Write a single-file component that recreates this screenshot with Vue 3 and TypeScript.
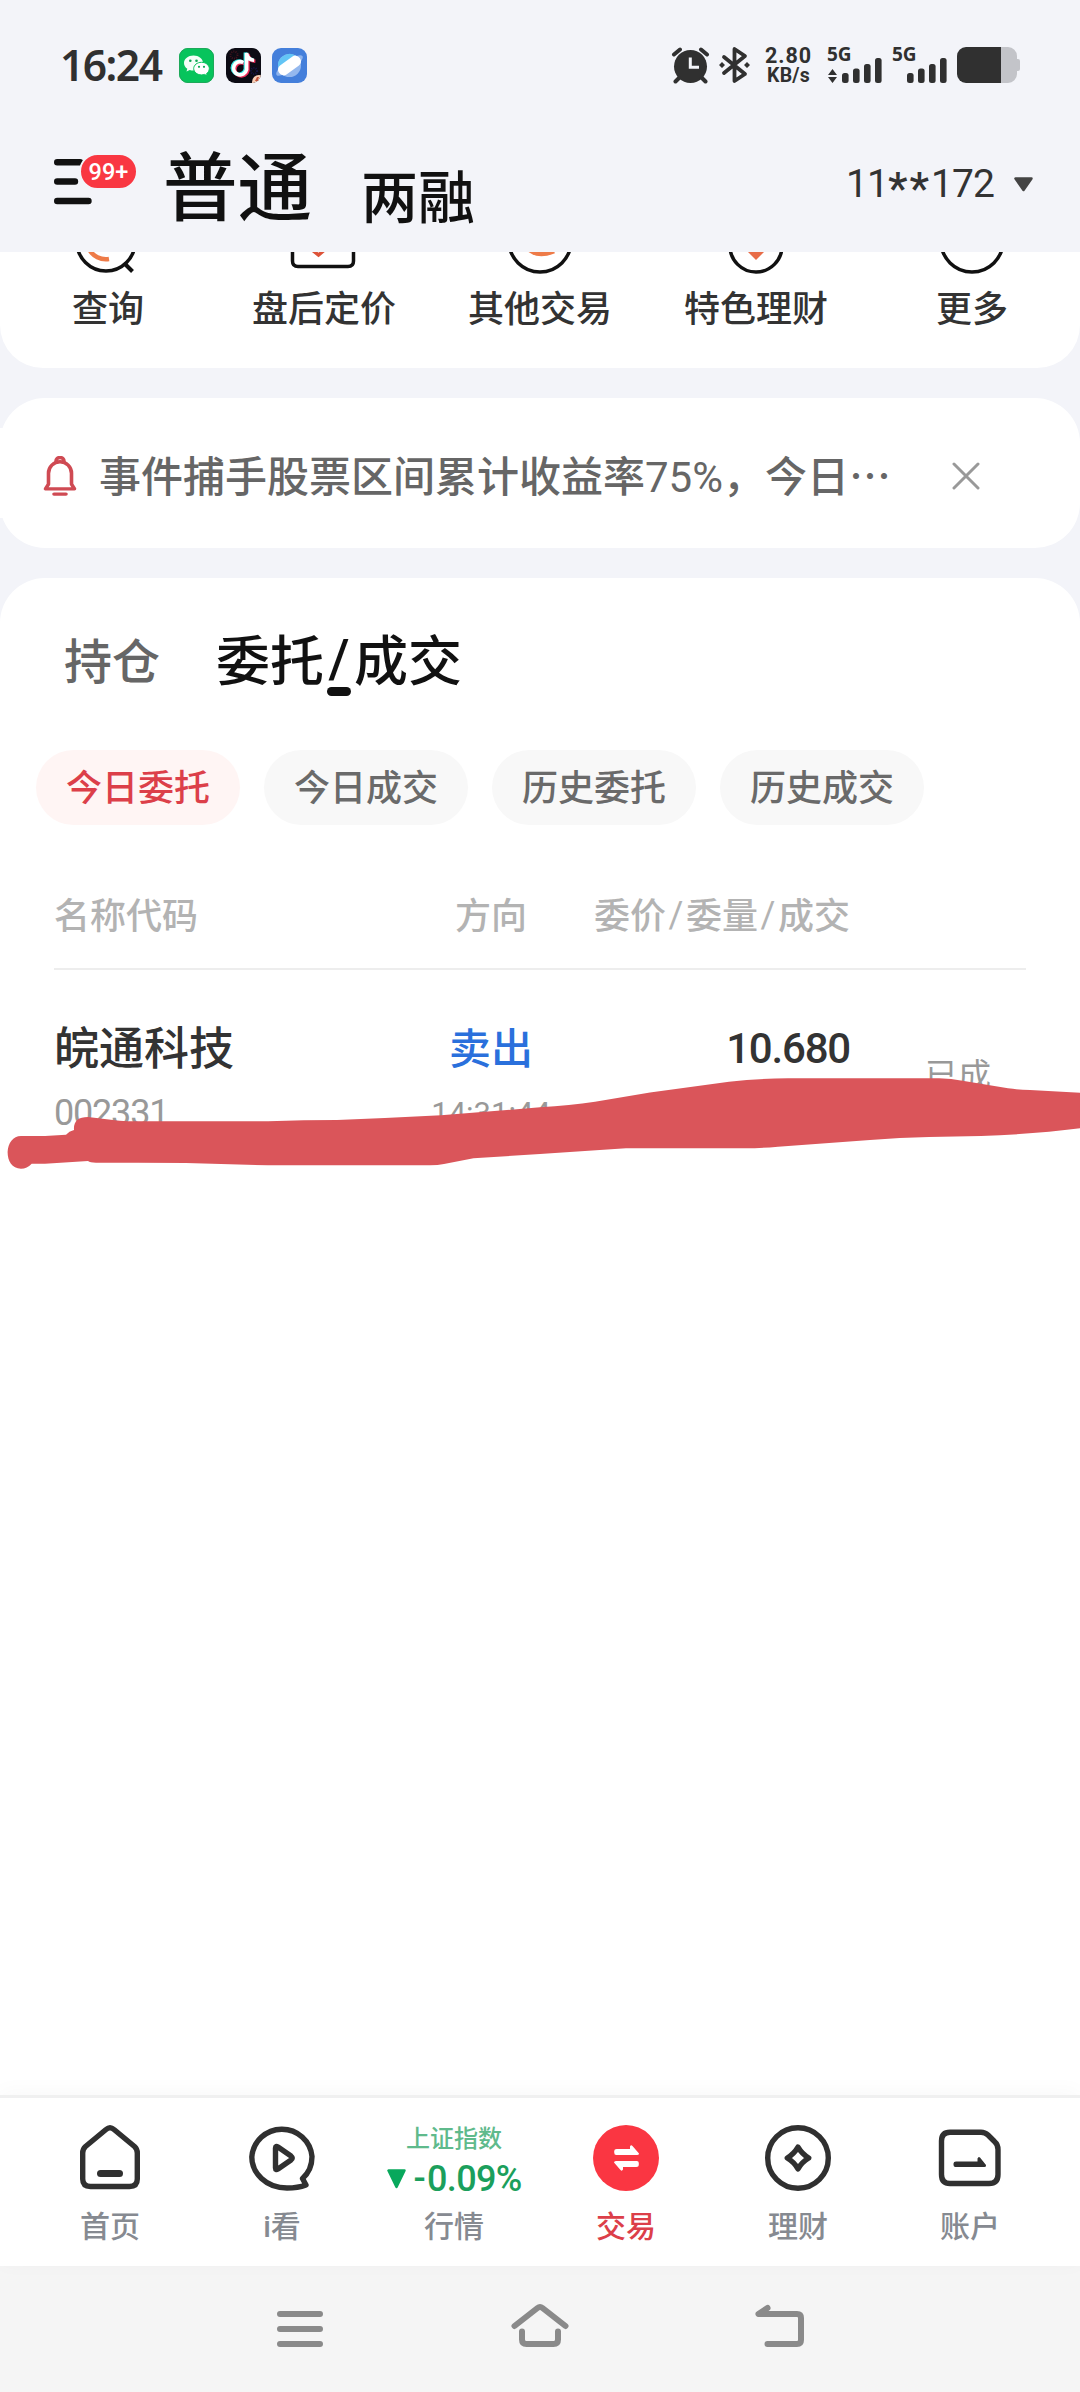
<script setup lang="ts">
interface Bar { x: number; y: number }

const shortcuts: { id: string; label: string }[] = [
  { id: 'query', label: '查询' },
  { id: 'after', label: '盘后定价' },
  { id: 'other', label: '其他交易' },
  { id: 'wealth', label: '特色理财' },
  { id: 'more', label: '更多' },
]
const filters: string[] = ['今日委托', '今日成交', '历史委托', '历史成交']
const tabs: { id: string; label: string }[] = [
  { id: 'home', label: '首页' },
  { id: 'look', label: 'i看' },
  { id: 'market', label: '行情' },
  { id: 'trade', label: '交易' },
  { id: 'finance', label: '理财' },
  { id: 'account', label: '账户' },
]
const bars: Bar[] = [
  { x: 15, y: 27 },
  { x: 26, y: 22.5 },
  { x: 37, y: 18 },
  { x: 48, y: 12 },
]
</script>

<template>
  <div class="phone">
    <div class="status">
      <div class="clock">16:24</div>
      <div class="apps">
        <svg width="35" height="35" viewBox="0 0 35 35">
          <rect width="35" height="35" rx="9" fill="#07c45c" />
          <rect x=".5" y=".5" width="34" height="34" rx="8.5" fill="none" stroke="#1ea85a" />
          <path d="M14.5 7.5c-5.3 0-9.5 3.3-9.5 7.5 0 2.4 1.300 4.400 3.300 5.800l-.8 2.700 3.200-1.600c1.200.4 2.500.6 3.800.6 5.300 0 9.500-3.300 9.500-7.500s-4.200-7.500-9.500-7.500z" fill="#f4fff8" />
          <path d="M22.500 14.300c-4.300 0-7.800 2.800-7.800 6.300s3.500 6.300 7.800 6.300c1.100 0 2.100-.2 3-.5l2.700 1.400-.6-2.300c1.700-1.200 2.700-2.900 2.700-4.900 0-3.500-3.500-6.300-7.800-6.300z" fill="#fff" stroke="#07c45c" stroke-width="1" />
          <g fill="#0ca652"><circle cx="11.300" cy="12.800" r="1.300" /><circle cx="17.500" cy="12.800" r="1.300" /><circle cx="20" cy="18.800" r="1.100" /><circle cx="25" cy="18.800" r="1.100" /></g>
        </svg>
        <svg width="35" height="35" viewBox="0 0 35 35">
          <defs><clipPath id="tk"><rect width="35" height="35" rx="9" /></clipPath></defs>
          <g clip-path="url(#tk)">
            <rect width="35" height="35" fill="#0c0b14" />
            <circle cx="8" cy="7" r="3.500" fill="none" stroke="#45131f" stroke-width="2" stroke-dasharray="1 1.200" />
            <circle cx="28" cy="23" r="3" fill="none" stroke="#171748" stroke-width="2" stroke-dasharray="1 1.200" />
            <g fill="none" stroke-width="3.600">
              <path d="M17.300 14.500a6.600 6.600 0 1 0 3.300 7.200V5c.5 4.500 3.300 7 7.500 7.300" stroke="#ee2d58" transform="translate(1.300 1)" />
              <path d="M17.300 14.500a6.600 6.600 0 1 0 3.300 7.200V5c.5 4.500 3.300 7 7.500 7.300" stroke="#3fe5e3" transform="translate(-1.200 -.6)" />
              <path d="M17.300 14.500a6.600 6.600 0 1 0 3.300 7.200V5c.5 4.500 3.300 7 7.500 7.300" stroke="#fff" />
            </g>
            <circle cx="33" cy="34" r="7" fill="#f8cdb5" />
            <path d="M31 29l-2 4h2l-1 3 4-4h-2l1-3z" fill="#c4553c" />
          </g>
        </svg>
        <svg width="35" height="35" viewBox="0 0 35 35">
          <rect width="35" height="35" rx="9" fill="#447fdb" />
          <circle cx="17.500" cy="17.500" r="11.500" fill="#94b8ee" />
          <path d="M6.600 21A11.500 11.500 0 0 1 24 8z" fill="#63c5f5" />
          <g transform="rotate(-36 17.500 17.500)">
            <ellipse cx="17.500" cy="17.500" rx="16" ry="5" fill="#8fb4ec" />
            <rect x="4.800" y="12" width="25.400" height="11" rx="5" fill="#fff" />
          </g>
        </svg>
      </div>
      <div class="sys">
        <svg class="alarm" width="39" height="38" viewBox="0 0 39 38">
          <circle cx="19.500" cy="20.500" r="16.500" fill="#303030" />
          <path d="M3 8.500L9 3.500M36 8.500L30 3.500M8 32l-3.500 3.500M31 32l3.500 3.500" stroke="#303030" stroke-width="4" stroke-linecap="round" />
          <path d="M19.300 11.500V21.300H28" fill="none" stroke="#f3f4f9" stroke-width="3" />
        </svg>
        <svg class="bt" width="31" height="38" viewBox="0 0 31 38">
          <path d="M5 11L26 28 15.500 35V3L26 10 5 27" fill="none" stroke="#303030" stroke-width="3.800" stroke-linejoin="round" stroke-linecap="round" />
          <path d="M3 16l3 3-3 3-3-3zM28 16l3 3-3 3-3-3z" fill="#303030" />
        </svg>
        <div class="net"><span>2.80</span><span class="unit">KB/s</span></div>
        <div v-for="n in 2" :key="n" class="sig">
          <svg width="56" height="38" viewBox="0 0 56 38">
            <rect v-for="b in bars" :key="b.x" :x="b.x" :y="b.y" width="6.600" :height="37 - b.y" rx="2.500" fill="#303030" />
            <path v-if="n === 1" d="M5.500 23l4.500 6H1zM5.500 37l4.500-6H1z" fill="#303030" />
          </svg>
          <span class="gen">5G</span>
        </div>
        <svg class="batt" width="63" height="36" viewBox="0 0 63 36">
          <path d="M44 0h7a9 9 0 0 1 9 9v3h1a2 2 0 0 1 2 2v8a2 2 0 0 1-2 2h-1v3a9 9 0 0 1-9 9h-7z" fill="#c3c4c9" />
          <path d="M9 0h35v36H9a9 9 0 0 1-9-9V9a9 9 0 0 1 9-9z" fill="#303030" />
        </svg>
      </div>
    </div>

    <header class="head">
      <div class="menu">
        <svg width="40" height="46" viewBox="0 0 40 46">
          <path d="M3.200 3.200H26M3.200 22.500H21M3.200 42H34.500" stroke="#111" stroke-width="6.400" stroke-linecap="round" />
        </svg>
        <span class="badge">99+</span>
      </div>
      <div class="t1">普通</div>
      <div class="t2">两融</div>
      <div class="acct">11<span class="star">**</span>172</div>
      <svg class="caret" width="19" height="15" viewBox="0 0 19 15"><path d="M1.500 1.500h16L9.500 13z" fill="#444" stroke="#444" stroke-width="2.500" stroke-linejoin="round" /></svg>
    </header>

    <section class="short">
      <div v-for="s in shortcuts" :key="s.id" class="cell">
        <svg width="72" height="22" viewBox="0 0 72 22">
          <g fill="none" stroke="#111" stroke-width="3.500">
            <template v-if="s.id === 'query'">
              <circle cx="34" cy="-10" r="29" /><path d="M52 11l8.500 8.500" stroke-width="4" />
              <path d="M17 -3a19 19 0 0 0 20 10" stroke="#ee7b48" stroke-width="4.500" />
            </template>
            <template v-else-if="s.id === 'after'">
              <path d="M4.500 -5V9q0 5.500 5.500 5.500H60q5.500 0 5.500-5.500V-5" />
              <path d="M23 -3l7.500 6L40 -5" stroke="#dd5238" />
            </template>
            <template v-else-if="s.id === 'other'">
              <circle cx="36" cy="-11" r="31" />
              <path d="M26 -2q9 7 24 1" stroke="#ee7b48" stroke-width="5" />
            </template>
            <template v-else-if="s.id === 'wealth'">
              <circle cx="36" cy="-6" r="26" />
              <path d="M28 0h16l-8 8z" fill="#e86c48" stroke="none" />
            </template>
            <circle v-else cx="36" cy="-11" r="31" />
          </g>
        </svg>
        <span>{{ s.label }}</span>
      </div>
    </section>

    <section class="news">
      <svg class="bell" width="34" height="40" viewBox="0 0 34 42" preserveAspectRatio="none">
        <g fill="none" stroke="#cf4a53" stroke-width="3.600" stroke-linejoin="round" stroke-linecap="round">
          <path d="M2.500 34.500h29l-3-5V18a11.500 12 0 0 0-23 0v11.500z" />
          <path d="M13 5.500a4 4 0 0 1 8 0M11 40h12" />
        </g>
      </svg>
      <div class="msg">事件捕手股票区间累计收益率<span class="num">75%</span>，今日<span class="dots">…</span></div>
      <svg width="28" height="28" viewBox="0 0 28 28"><path d="M2 2l24 24M26 2L2 26" stroke="#999" stroke-width="3" stroke-linecap="round" /></svg>
    </section>

    <section class="orders">
      <div class="tabs">
        <div class="tab">持仓</div>
        <div class="tab on">委托<span class="sl">/</span>成交<i class="pill" /></div>
      </div>
      <div class="filters">
        <div v-for="(f, i) in filters" :key="f" class="chip" :class="{ on: i === 0 }">{{ f }}</div>
      </div>
      <div class="thead">
        <div class="c1">名称代码</div>
        <div class="c2">方向</div>
        <div class="c3">委价<b>/</b>委量<b>/</b>成交</div>
      </div>
      <div class="row">
        <div class="c1"><div class="name">皖通科技</div><div class="code">002331</div></div>
        <div class="c2"><div class="dir">卖出</div><div class="time">14:31:44</div></div>
        <div class="c3"><div class="price">10.680</div></div>
        <div class="c4">已成</div>
        <svg class="scribble" width="1080" height="110" viewBox="0 1070 1080 110">
          <path fill="#da555a" d="M7.600 1152C8 1143 13 1136 21 1136L45 1136 66 1134.700Q69 1131 74 1130Q73 1117 88 1117L117 1120.500Q122 1121.500 140 1121.300L268 1121.300Q305 1120 337 1120Q390 1118 441 1115.300L540 1107.300Q570 1105.500 595 1101.700L650 1092.500 729 1081.700Q760 1078.300 788 1078.300L939 1078.300Q951 1078.500 964 1081L1008 1088.300Q1018 1089.700 1030 1090L1080 1092.700V1128.300Q1035 1134 981 1136L929 1137Q900 1137.500 870 1140L778 1146.700Q760 1148.300 746 1148.300L626 1148.300 540 1154 473.500 1158.300 444 1164Q438 1165.300 430 1165.300L268 1165.300 186 1163 138 1162.700H96Q90 1162.700 88 1161L45 1163.700H31.700Q27 1168.700 21 1168.700C12 1168.700 7.600 1161 7.600 1152Z" />
        </svg>
      </div>
    </section>

    <nav class="tabbar">
      <div v-for="t in tabs" :key="t.id" class="ti" :class="{ on: t.id === 'trade' }">
        <div v-if="t.id === 'market'" class="idx">
          <div class="in">上证指数</div>
          <div class="iv"><svg width="19" height="20" viewBox="0 0 19 20"><path d="M1.500 1.500h16L9.500 18z" fill="#08a85c" stroke="#08a85c" stroke-width="2.500" stroke-linejoin="round" /></svg><span><span class="minus">-</span>0.09%</span></div>
        </div>
        <svg v-else class="ic" width="68" height="68" viewBox="0 0 68 68">
          <g fill="none" stroke="#303030" stroke-width="5.400" stroke-linejoin="round" stroke-linecap="round">
            <template v-if="t.id === 'home'">
              <path d="M30 5.500Q34 2 38 5.500L58.500 22.500Q61.300 25 61.300 29V55Q61.300 62.500 53.500 62.500H14.500Q6.700 62.500 6.700 55V29Q6.700 25 9.500 22.500Z" />
              <path d="M24.500 49.500H43.500" stroke-width="7" />
            </template>
            <template v-else-if="t.id === 'look'">
              <path d="M54.500 54.500Q64 46 64 32.500A30.200 30 0 0 0 3.800 33C3.800 49 18 64 39 64Q50 64 58 61Z" />
              <path d="M27.500 24Q27.500 21.500 30 23L43 32Q45.500 34 43 36L30 45Q27.500 46.500 27.500 44Z" />
            </template>
            <template v-else-if="t.id === 'trade'">
              <circle cx="34" cy="34" r="33" fill="#fa3642" stroke="none" />
              <path d="M22.200 28.500v-1.500q0-2 2.500-2H38v-2.500q1-2 2.500-.5L47 29.500q0 1.500-2 1.500H24.200q-2 0-2-2.500zM46.800 39v1.500q0 2.500-2.500 2.500H31v2.500q-1 2-2.500.5L22 38.500q0-1.500 2-1.500H44.800q2 0 2 2z" fill="#fff" stroke="none" />
            </template>
            <template v-else-if="t.id === 'finance'">
              <circle cx="34" cy="34" r="30.300" />
              <path d="M34 23.200Q38 30 44.700 34Q38 38 34 44.800Q30 38 23.300 34Q30 30 34 23.200Z" />
            </template>
            <template v-else>
              <path d="M14 8.200H45Q49 8.200 52 11L58.500 17.500Q62 20.500 62 25.500V50.500Q62 59.500 53 59.500H14Q5.500 59.500 5.500 50.500V17Q5.500 8.200 14 8.200Z" />
              <path d="M17.500 42.800V39.500q0-2 2.500-2H41.500V34.500q1-2.500 2.500-1L50 41q.5 2-1.500 2H19.500q-2 0-2-2z" fill="#303030" stroke="none" />
            </template>
          </g>
        </svg>
        <span class="tl">{{ t.label }}</span>
      </div>
    </nav>

    <div class="sysnav">
      <svg width="60" height="50" viewBox="0 0 60 50"><path d="M10 14H50M10 29H50M10 44H50" stroke="#8a8a8a" stroke-width="6" stroke-linecap="round" /></svg>
      <svg width="60" height="50" viewBox="0 0 60 50"><path d="M4.500 26L27.500 8Q30 6 32.500 8L55.500 26M12 31.500V39.500Q12 44 16.500 44H43.500Q48 44 48 39.500V31.500" fill="none" stroke="#8a8a8a" stroke-width="6" stroke-linecap="round" stroke-linejoin="round" /></svg>
      <svg width="60" height="50" viewBox="0 0 60 50"><path d="M17.500 8L8.500 14H47Q51 14 51 18V40Q51 44 47 44H17.500" fill="none" stroke="#8a8a8a" stroke-width="6" stroke-linecap="round" stroke-linejoin="round" /></svg>
    </div>
  </div>
</template>

<style>
body { margin: 0; background: #f3f4f9; }
</style>

<style scoped>
.phone { width: 1080px; height: 2392px; display: flex; flex-direction: column; overflow: hidden; background: #f3f4f9; font-family: Roboto, "Noto Sans CJK SC", sans-serif; color: #333; white-space: nowrap; font-weight: 500; }
svg { display: block; flex: none; }
.status { height: 130px; display: flex; align-items: center; padding: 0 60px; box-sizing: border-box; }
.clock { width: 119px; font: 600 42.500px/50px "Noto Sans", sans-serif; letter-spacing: -1.500px; color: #303030; }
.apps { display: flex; gap: 11.500px; }
.sys { margin-left: auto; display: flex; align-items: center; color: #303030; }
.bt { margin-left: 9px; }
.net { margin-left: 15px; width: 47px; display: flex; flex-direction: column; align-items: center; font: 700 21.500px/20px Roboto, sans-serif; letter-spacing: 1px; }
.net .unit { font-size: 19.500px; letter-spacing: .2px; line-height: 19px; }
.sig { position: relative; margin-left: 15px; width: 56px; }
.sig + .sig { margin-left: 9px; }
.gen { position: absolute; left: 0; top: 0; font: 700 19px/16px "Noto Sans", sans-serif; }
.batt { margin-left: 9px; }

.head { height: 122px; display: flex; align-items: flex-start; padding-left: 54px; flex: none; }
.menu { position: relative; width: 109px; padding-top: 29px; }
.badge { position: absolute; left: 25px; top: 23px; width: 55px; height: 33px; border: 2px solid #f3f4f9; border-radius: 19px; background: #f93742; color: #fff; font: 500 23.500px/34px Roboto, sans-serif; text-align: center; }
.t1 { font-size: 74.500px; line-height: 120px; color: #111; height: 122px; }
.t2 { font-size: 57px; line-height: 138px; color: #111; margin-left: 49px; }
.acct { margin-left: auto; font-size: 39px; line-height: 109px; letter-spacing: -.9px; color: #333; font-weight: 400; }
.star { position: relative; top: 7px; font-size: 44px; letter-spacing: 2px; line-height: 20px; font-weight: 500; }
.caret { margin: 47px 47px 0 20px; }

.short { height: 116px; background: #fff; border-radius: 0 0 43px 43px; display: flex; overflow: hidden; flex: none; }
.cell { flex: 1; display: flex; flex-direction: column; align-items: center; font-size: 36px; line-height: 36px; color: #333; }
.cell span { margin-top: 18px; }

.news { position: relative; height: 150px; margin-top: 30px; background: #fff; border-radius: 45px; display: flex; align-items: center; padding: 6px 0 0 43px; box-sizing: border-box; flex: none; }
.news::before { content: ""; position: absolute; left: 0; top: 30px; width: 3px; height: 90px; background: #fff; }
.msg { margin-left: 22px; width: 853px; font-size: 42px; line-height: 60px; color: #666; }
.num { font-weight: 400; }
.dots { font-family: "Noto Sans CJK SC", sans-serif; }

.orders { flex: 1; margin-top: 30px; background: #fff; border-radius: 45px 45px 0 0; }
.tabs { display: flex; align-items: center; padding: 49px 0 0 64px; height: 72px; }
.tab { font-size: 48px; color: #666; line-height: 72px; }
.tab.on { position: relative; font-size: 54px; color: #111; margin-left: 56px; }
.sl { position: relative; top: -4px; display: inline-block; width: 30px; text-align: center; }
.pill { position: absolute; left: 50%; margin-left: -12px; top: 60px; width: 24px; height: 9px; border-radius: 5px; background: #111; }
.filters { display: flex; gap: 24px; padding: 51px 0 0 36px; }
.chip { width: 204px; height: 75px; border-radius: 38px; background: #f8f8f8; color: #6a6a6a; font-size: 36px; line-height: 79px; text-align: center; }
.chip.on { background: #fff5f4; color: #dc3f49; }
.thead { display: flex; margin: 54px 54px 0; height: 89px; border-bottom: 2px solid #ededed; font-size: 36px; line-height: 76px; color: #b3b3b3; }
.thead b { position: relative; top: -2px; display: inline-block; width: 20px; text-align: center; font-weight: 400; }
.c1 { width: 346px; }
.thead .c2 { width: 182px; text-align: center; }
.thead .c3 { margin-left: auto; margin-right: 176px; }
.row { position: relative; display: flex; padding: 0 54px; height: 210px; }
.name { font-size: 45px; line-height: 56px; color: #333; margin-top: 52px; }
.code { font-size: 36px; line-height: 40px; letter-spacing: -1.200px; color: #999; margin-top: 15px; font-weight: 400; }
.row .c2 { width: 182px; text-align: center; }
.dir { font-size: 42px; line-height: 56px; color: #2a70dc; margin-top: 52px; }
.time { font-size: 31px; line-height: 40px; color: #999; margin-top: 16px; font-weight: 400; }
.row .c3 { width: 268px; text-align: right; }
.price { font-size: 42px; line-height: 56px; letter-spacing: -1.200px; margin-top: 51px; }
.c4 { margin-left: 75px; margin-top: 84px; font-size: 33px; line-height: 44px; color: #999; font-weight: 400; }
.scribble { position: absolute; left: 0; top: 100px; }

.tabbar { position: relative; height: 168px; border-top: 3px solid #f0f0f0; background: #fff; display: flex; padding: 0 24px; flex: none; box-shadow: 0 -3px 20px rgba(0, 0, 0, .03); }
.ti { flex: 1; display: flex; flex-direction: column; align-items: center; color: #868a91; }
.ti.on { color: #dc3f49; }
.ic { margin-top: 26px; }
.tl { font-size: 30px; line-height: 36px; margin-top: 17px; }
.idx { margin-top: 26px; height: 68px; display: flex; flex-direction: column; align-items: center; }
.in { font-size: 24px; line-height: 30px; color: #5fba8c; }
.iv { display: flex; align-items: center; gap: 8px; font-size: 36px; line-height: 44px; color: #1b9f5c; font-weight: 500; letter-spacing: -.7px; margin-top: 3px; }
.minus { margin-right: 2px; }
.sysnav { height: 126px; background: #f5f5f5; display: flex; justify-content: center; gap: 180px; flex: none; }
.sysnav svg { margin-top: 34px; }
</style>
